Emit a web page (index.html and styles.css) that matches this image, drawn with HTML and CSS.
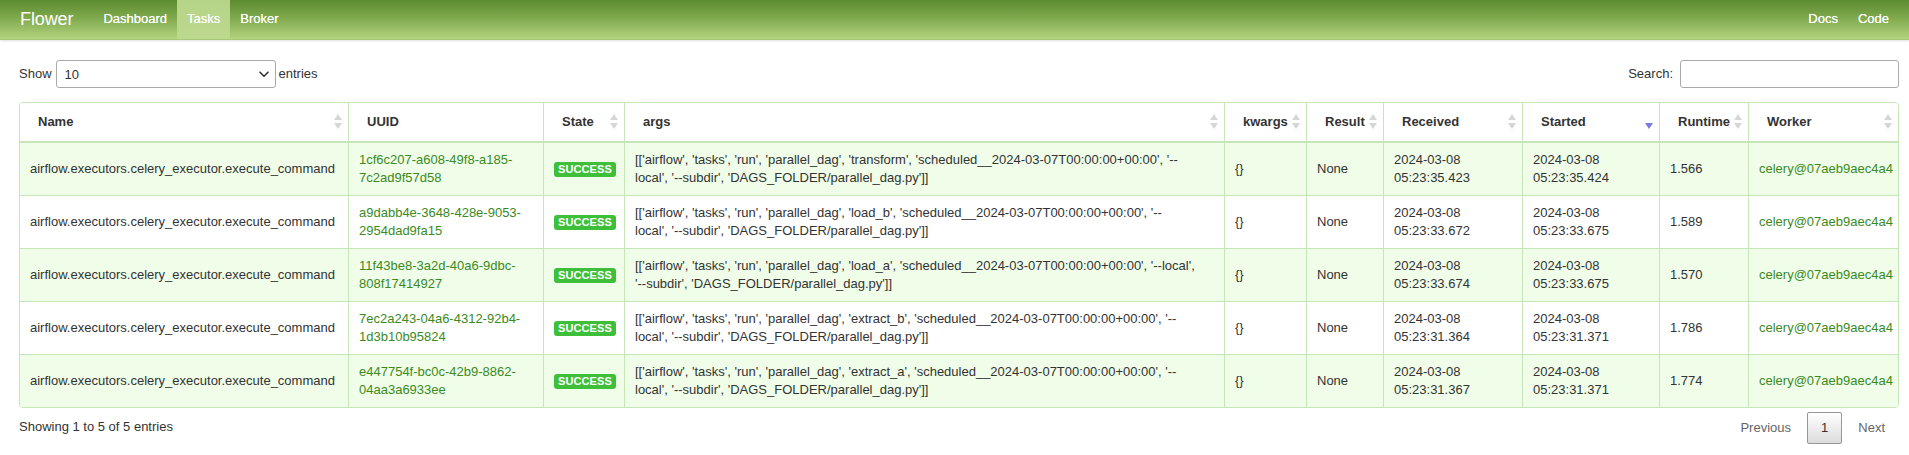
FILE: index.html
```html
<!DOCTYPE html>
<html lang="en">
<head>
<meta charset="utf-8">
<title>Flower</title>
<link rel="stylesheet" href="styles.css">
</head>
<body>
<nav class="navbar">
  <a class="brand" href="#">Flower</a>
  <ul class="nav">
    <li><a href="#">Dashboard</a></li>
    <li class="active"><a href="#">Tasks</a></li>
    <li><a href="#">Broker</a></li>
  </ul>
  <ul class="nav nav-right">
    <li><a href="#">Docs</a></li>
    <li><a href="#">Code</a></li>
  </ul>
</nav>
<main class="content">
  <div class="controls">
    <label class="length">Show
      <span class="select-wrap">
        <select class="select"><option>10</option><option>25</option><option>50</option><option>100</option></select>
        <svg class="chev" width="10" height="7" viewBox="0 0 10 7"><path d="M1 1.2 L5 5.2 L9 1.2" fill="none" stroke="#333" stroke-width="1.6" stroke-linecap="round" stroke-linejoin="round"/></svg>
      </span>
      entries</label>
    <label class="filter">Search:<input class="search" type="search"></label>
  </div>
  <table class="tasks">
    <thead>
      <tr>
        <th class="c-name sortable">Name</th>
        <th class="c-uuid">UUID</th>
        <th class="c-state sortable">State</th>
        <th class="c-args sortable">args</th>
        <th class="c-kwargs sortable">kwargs</th>
        <th class="c-result sortable">Result</th>
        <th class="c-received sortable">Received</th>
        <th class="c-started sortable desc">Started</th>
        <th class="c-runtime sortable">Runtime</th>
        <th class="c-worker sortable">Worker</th>
      </tr>
    </thead>
    <tbody>
      <tr>
        <td class="nowrap">airflow.executors.celery_executor.execute_command</td>
        <td><a href="#">1cf6c207-a608-49f8-a185-7c2ad9f57d58</a></td>
        <td><span class="badge">SUCCESS</span></td>
        <td>[['airflow', 'tasks', 'run', 'parallel_dag', 'transform', 'scheduled__2024-03-07T00:00:00+00:00', '--<br>local', '--subdir', 'DAGS_FOLDER/parallel_dag.py']]</td>
        <td>{}</td>
        <td>None</td>
        <td>2024-03-08 05:23:35.423</td>
        <td>2024-03-08 05:23:35.424</td>
        <td>1.566</td>
        <td class="nowrap"><a href="#">celery@07aeb9aec4a4</a></td>
      </tr>
      <tr>
        <td class="nowrap">airflow.executors.celery_executor.execute_command</td>
        <td><a href="#">a9dabb4e-3648-428e-9053-2954dad9fa15</a></td>
        <td><span class="badge">SUCCESS</span></td>
        <td>[['airflow', 'tasks', 'run', 'parallel_dag', 'load_b', 'scheduled__2024-03-07T00:00:00+00:00', '--<br>local', '--subdir', 'DAGS_FOLDER/parallel_dag.py']]</td>
        <td>{}</td>
        <td>None</td>
        <td>2024-03-08 05:23:33.672</td>
        <td>2024-03-08 05:23:33.675</td>
        <td>1.589</td>
        <td class="nowrap"><a href="#">celery@07aeb9aec4a4</a></td>
      </tr>
      <tr>
        <td class="nowrap">airflow.executors.celery_executor.execute_command</td>
        <td><a href="#">11f43be8-3a2d-40a6-9dbc-808f17414927</a></td>
        <td><span class="badge">SUCCESS</span></td>
        <td>[['airflow', 'tasks', 'run', 'parallel_dag', 'load_a', 'scheduled__2024-03-07T00:00:00+00:00', '--local',<br>'--subdir', 'DAGS_FOLDER/parallel_dag.py']]</td>
        <td>{}</td>
        <td>None</td>
        <td>2024-03-08 05:23:33.674</td>
        <td>2024-03-08 05:23:33.675</td>
        <td>1.570</td>
        <td class="nowrap"><a href="#">celery@07aeb9aec4a4</a></td>
      </tr>
      <tr>
        <td class="nowrap">airflow.executors.celery_executor.execute_command</td>
        <td><a href="#">7ec2a243-04a6-4312-92b4-1d3b10b95824</a></td>
        <td><span class="badge">SUCCESS</span></td>
        <td>[['airflow', 'tasks', 'run', 'parallel_dag', 'extract_b', 'scheduled__2024-03-07T00:00:00+00:00', '--<br>local', '--subdir', 'DAGS_FOLDER/parallel_dag.py']]</td>
        <td>{}</td>
        <td>None</td>
        <td>2024-03-08 05:23:31.364</td>
        <td>2024-03-08 05:23:31.371</td>
        <td>1.786</td>
        <td class="nowrap"><a href="#">celery@07aeb9aec4a4</a></td>
      </tr>
      <tr>
        <td class="nowrap">airflow.executors.celery_executor.execute_command</td>
        <td><a href="#">e447754f-bc0c-42b9-8862-04aa3a6933ee</a></td>
        <td><span class="badge">SUCCESS</span></td>
        <td>[['airflow', 'tasks', 'run', 'parallel_dag', 'extract_a', 'scheduled__2024-03-07T00:00:00+00:00', '--<br>local', '--subdir', 'DAGS_FOLDER/parallel_dag.py']]</td>
        <td>{}</td>
        <td>None</td>
        <td>2024-03-08 05:23:31.367</td>
        <td>2024-03-08 05:23:31.371</td>
        <td>1.774</td>
        <td class="nowrap"><a href="#">celery@07aeb9aec4a4</a></td>
      </tr>
    </tbody>
  </table>
  <div class="table-footer">
    <div class="info">Showing 1 to 5 of 5 entries</div>
    <div class="paginate">
      <a class="page-btn disabled" href="#">Previous</a>
      <a class="page-btn current" href="#">1</a>
      <a class="page-btn disabled" href="#">Next</a>
    </div>
  </div>
</main>
</body>
</html>
```

FILE: styles.css
```css
* { box-sizing: border-box; }

html, body {
  margin: 0;
  padding: 0;
  background: #fff;
}

body {
  font-family: "Liberation Sans", Arial, Helvetica, sans-serif;
  font-size: 13px;
  line-height: 18px;
  color: #333;
}

a { color: #3b8a1e; text-decoration: none; }

/* ---------- navbar ---------- */
.navbar {
  display: flex;
  align-items: stretch;
  height: 40px;
  padding: 0 10px;
  background: linear-gradient(to bottom, #5b8b30 0%, #7fa94d 45%, #b3d37f 100%);
  border-bottom: 1px solid #a6c776;
  box-shadow: 0 1px 2px rgba(0, 0, 0, 0.12);
}

.brand {
  color: #fff;
  font-size: 18px;
  line-height: 38px;
  padding: 0 20px 0 10px;
  letter-spacing: -0.1px;
}

.nav {
  display: flex;
  list-style: none;
  margin: 0;
  padding: 0;
}

.nav-right { margin-left: auto; }

.nav li a {
  display: block;
  height: 39px;
  line-height: 38px;
  padding: 0 10px;
  color: #fff;
  font-size: 13px;
  text-shadow: 0 0 0.4px rgba(255, 255, 255, 0.9);
}

.nav li.active a {
  background: linear-gradient(to bottom, #b6d487 0%, #bcd98d 100%);
}

/* ---------- content ---------- */
.content {
  padding: 20px 10px 0 19px;
}

.controls {
  display: flex;
  justify-content: space-between;
  align-items: center;
  height: 28px;
}

.length, .filter {
  display: flex;
  align-items: center;
}

.select-wrap {
  position: relative;
  display: inline-block;
  width: 220px;
  height: 28px;
  margin: 0 3px 0 4px;
}

.select {
  appearance: none;
  -webkit-appearance: none;
  width: 100%;
  height: 28px;
  border: 1px solid #aaa;
  border-radius: 3px;
  background: #fff;
  padding: 0 8px;
  font-family: inherit;
  font-size: 13px;
  color: #333;
}

.chev {
  position: absolute;
  right: 7px;
  top: 11px;
  pointer-events: none;
}

.search {
  width: 219px;
  height: 28px;
  margin-left: 7px;
  border: 1px solid #aaa;
  border-radius: 3px;
  padding: 0 6px;
  font-family: inherit;
  font-size: 13px;
}

/* ---------- table ---------- */
.tasks {
  width: 1880px;
  margin-top: 14px;
  table-layout: fixed;
  border-collapse: separate;
  border-spacing: 0;
  border: 1px solid #c6e6b8;
  border-radius: 4px;
}

.tasks th, .tasks td {
  text-align: left;
  vertical-align: middle;
}

.tasks th {
  position: relative;
  height: 40px;
  padding: 10px 18px;
  font-weight: bold;
  background: #fff;
  border-bottom: 2px solid #c6e6b8;
}

.tasks th + th, .tasks td + td {
  border-left: 1px solid #c6e6b8;
}

.tasks td {
  height: 53px;
  padding: 8px 10px;
}

.tasks tbody tr + tr td {
  border-top: 1px solid #c6e6b8;
}

.tasks tbody tr:nth-child(odd) td {
  background: #effde9;
}

.tasks tbody tr:first-child td { height: 52px; }

.tasks tbody tr:last-child td:first-child { border-bottom-left-radius: 3px; }
.tasks tbody tr:last-child td:last-child { border-bottom-right-radius: 3px; }
.tasks thead th:first-child { border-top-left-radius: 3px; }
.tasks thead th:last-child { border-top-right-radius: 3px; }

.nowrap { white-space: nowrap; }

.c-name     { width: 328px; }
.c-uuid     { width: 195px; }
.c-state    { width: 81px; }
.c-args     { width: 600px; }
.c-kwargs   { width: 82px; }
.c-result   { width: 77px; }
.c-received { width: 139px; }
.c-started  { width: 137px; }
.c-runtime  { width: 89px; }
.c-worker   { width: 150px; }

/* sort arrows */
.sortable::before,
.sortable::after {
  content: "";
  position: absolute;
  right: 6px;
  width: 0;
  height: 0;
  border-left: 4px solid transparent;
  border-right: 4px solid transparent;
}

.sortable::before {
  top: 50%;
  margin-top: -8px;
  border-bottom: 6px solid #d6d6d6;
}

.sortable::after {
  top: 50%;
  margin-top: 1px;
  border-top: 6px solid #d6d6d6;
}

.sortable.desc::before { display: none; }
.sortable.desc::after { border-top-color: #7a7ae4; }

.badge {
  display: inline-block;
  padding: 1px 4px;
  font-size: 11px;
  line-height: 13px;
  font-weight: bold;
  color: #fff;
  background: #3dbf3a;
  border-radius: 3px;
  letter-spacing: 0.1px;
}

/* ---------- footer ---------- */
.table-footer {
  display: flex;
  justify-content: space-between;
  align-items: flex-start;
}

.info {
  padding-top: 10px;
}

.paginate {
  display: flex;
  padding-top: 4px;
}

.page-btn {
  display: block;
  padding: 6px 13px;
  margin-left: 2px;
  border: 1px solid transparent;
  border-radius: 2px;
  line-height: 18px;
  color: #666;
}

.page-btn.current {
  color: #333;
  border-color: #979797;
  background: linear-gradient(to bottom, #ffffff 0%, #dcdcdc 100%);
}
```
